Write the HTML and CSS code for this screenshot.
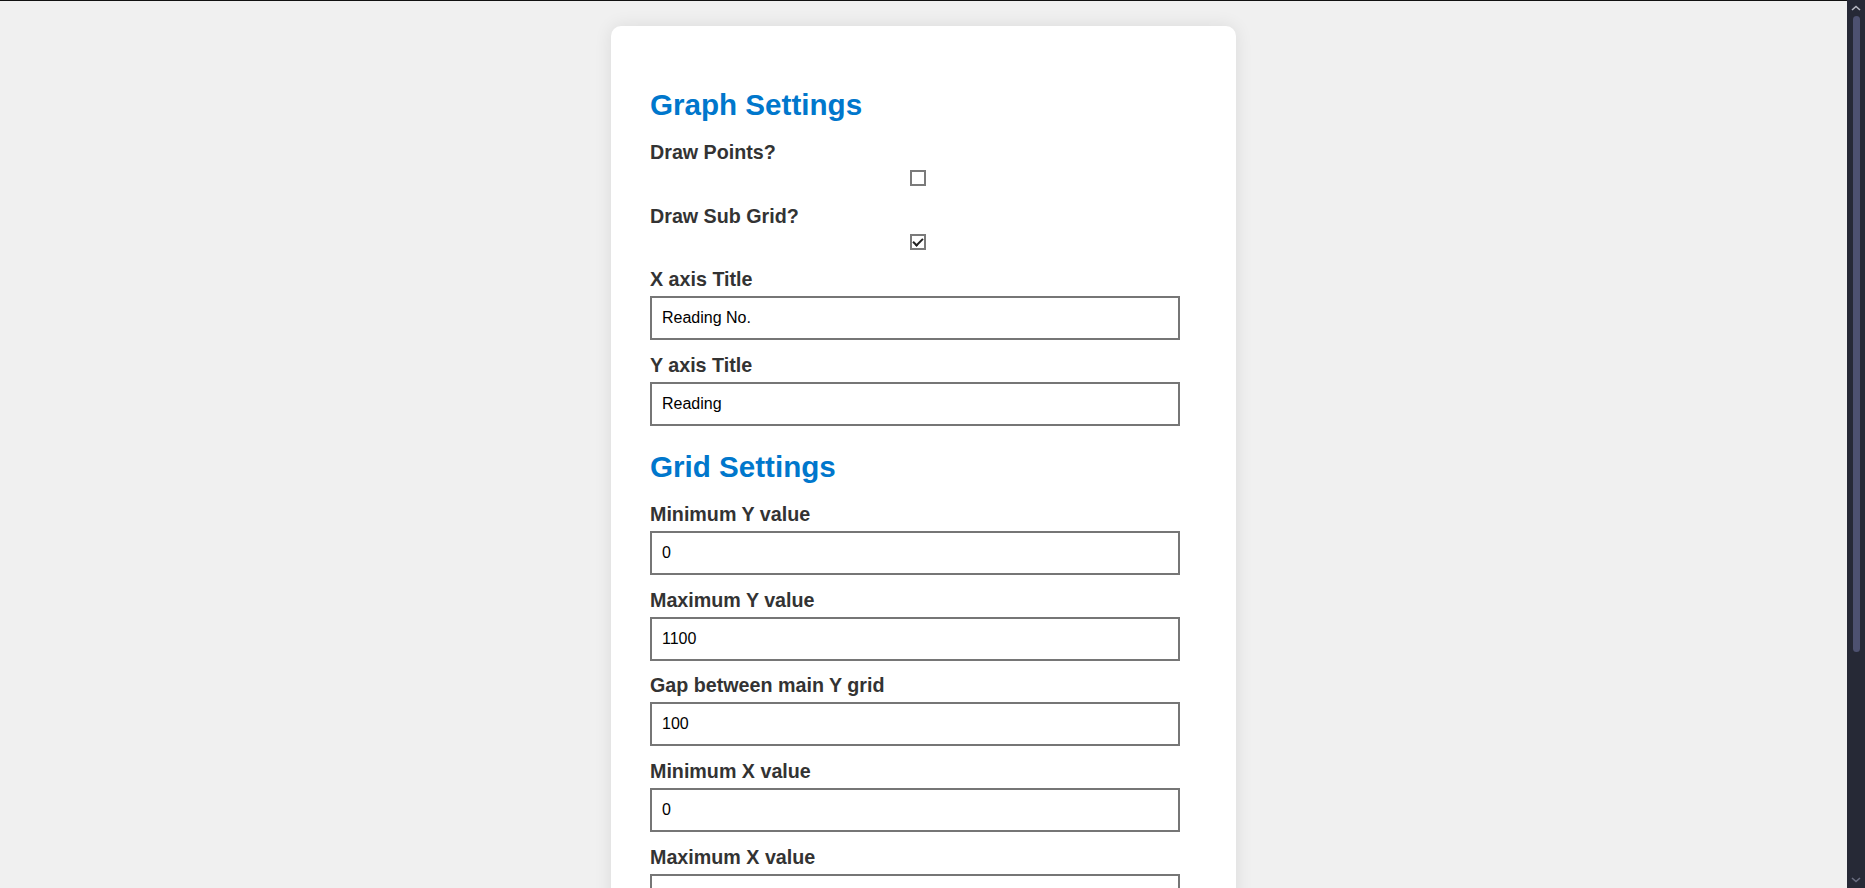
FILE: index.html
```html
<!DOCTYPE html>
<html lang="en">
<head>
<meta charset="utf-8">
<title>Graph Settings</title>
<link rel="stylesheet" href="styles.css">
</head>
<body>
<div class="page">
  <form class="card">
    <h2 class="section-title">Graph Settings</h2>

    <div class="field">
      <label class="field-label" for="drawPoints">Draw Points?</label>
      <div class="check-row"><input class="check" type="checkbox" id="drawPoints"></div>
    </div>

    <div class="field">
      <label class="field-label" for="drawSubGrid">Draw Sub Grid?</label>
      <div class="check-row"><input class="check" type="checkbox" id="drawSubGrid" checked></div>
    </div>

    <div class="field">
      <label class="field-label" for="xTitle">X axis Title</label>
      <input class="text-input" type="text" id="xTitle" value="Reading No.">
    </div>

    <div class="field">
      <label class="field-label" for="yTitle">Y axis Title</label>
      <input class="text-input" type="text" id="yTitle" value="Reading">
    </div>

    <h2 class="section-title">Grid Settings</h2>

    <div class="field">
      <label class="field-label" for="minY">Minimum Y value</label>
      <input class="text-input" type="text" id="minY" value="0">
    </div>

    <div class="field">
      <label class="field-label" for="maxY">Maximum Y value</label>
      <input class="text-input" type="text" id="maxY" value="1100">
    </div>

    <div class="field">
      <label class="field-label" for="gapY">Gap between main Y grid</label>
      <input class="text-input" type="text" id="gapY" value="100">
    </div>

    <div class="field">
      <label class="field-label" for="minX">Minimum X value</label>
      <input class="text-input" type="text" id="minX" value="0">
    </div>

    <div class="field">
      <label class="field-label" for="maxX">Maximum X value</label>
      <input class="text-input" type="text" id="maxX" value="10">
    </div>

    <div class="field">
      <label class="field-label" for="gapX">Gap between main X grid</label>
      <input class="text-input" type="text" id="gapX" value="1">
    </div>
  </form>
</div>

<div class="scrollbar" aria-hidden="true">
  <svg class="scroll-arrow" width="10" height="6" viewBox="0 0 10 6"><path d="M1 5 L5 1.5 L9 5" fill="none" stroke="#b8bac4" stroke-width="1.6"/></svg>
  <div class="scroll-track"><div class="scroll-thumb"></div></div>
  <svg class="scroll-arrow" width="10" height="6" viewBox="0 0 10 6"><path d="M1 1 L5 4.5 L9 1" fill="none" stroke="#6a6d80" stroke-width="1.6"/></svg>
</div>
</body>
</html>
```
FILE: styles.css
```css
html {
  border-top: 1px solid #111;
  background: #f0f0f0;
}

body {
  margin: 0;
  font-family: "Liberation Sans", Arial, sans-serif;
  font-size: 19.2px;
  color: #333;
}

.page {
  box-sizing: border-box;
  min-height: 1194px;
  padding: 25px 18px 26px 0;
}

.card {
  box-sizing: border-box;
  width: 625px;
  margin: 0 auto;
  padding: 35px 56px 40px 39px;
  background: #fff;
  border-radius: 10px;
  box-shadow: 0 0 18px rgba(0, 0, 0, 0.09);
}

.section-title {
  margin: 24.5px 0 20px;
  font-size: 29.6px;
  font-weight: bold;
  line-height: 33px;
  color: #0077cc;
}

.section-title:first-child {
  margin-top: 27px;
}

.field {
  margin-bottom: 13.6px;
}

.field-label {
  display: block;
  margin-bottom: 6px;
  font-size: 19.7px;
  font-weight: bold;
  line-height: 22px;
  color: #333;
}

.check-row {
  display: flex;
  justify-content: center;
  padding-left: 6px;
  padding-top: 1px;
  padding-bottom: 5px;
}

.check {
  -webkit-appearance: none;
  appearance: none;
  box-sizing: border-box;
  position: relative;
  width: 16px;
  height: 16px;
  margin: 0;
  border: 2px solid #7a7a7a;
  border-radius: 0;
  background: #fff;
}

.check:checked::after {
  content: "";
  position: absolute;
  left: 3px;
  top: 0px;
  width: 4px;
  height: 8px;
  border: solid #222;
  border-width: 0 2px 2px 0;
  transform: rotate(45deg);
}

.text-input {
  display: block;
  box-sizing: border-box;
  width: 530px;
  height: 44px;
  margin: 0;
  padding: 0 10px;
  border: 2px solid #767676;
  border-radius: 0;
  font-family: "Liberation Sans", Arial, sans-serif;
  font-size: 16px;
  color: #000;
  background: #fff;
}

/* window scrollbar drawn over the right edge of the viewport */
.scrollbar {
  position: fixed;
  top: 0;
  right: 0;
  width: 18px;
  height: 100vh;
  display: flex;
  flex-direction: column;
  align-items: center;
  background: #262936;
}

.scroll-arrow {
  flex: none;
  margin: 5px 0;
}

.scroll-track {
  flex: 1;
  width: 100%;
  display: flex;
  justify-content: center;
  padding-left: 1px;
  box-sizing: border-box;
}

.scroll-thumb {
  width: 7px;
  height: 636px;
  border-radius: 4px;
  background: #4d5170;
}
```
